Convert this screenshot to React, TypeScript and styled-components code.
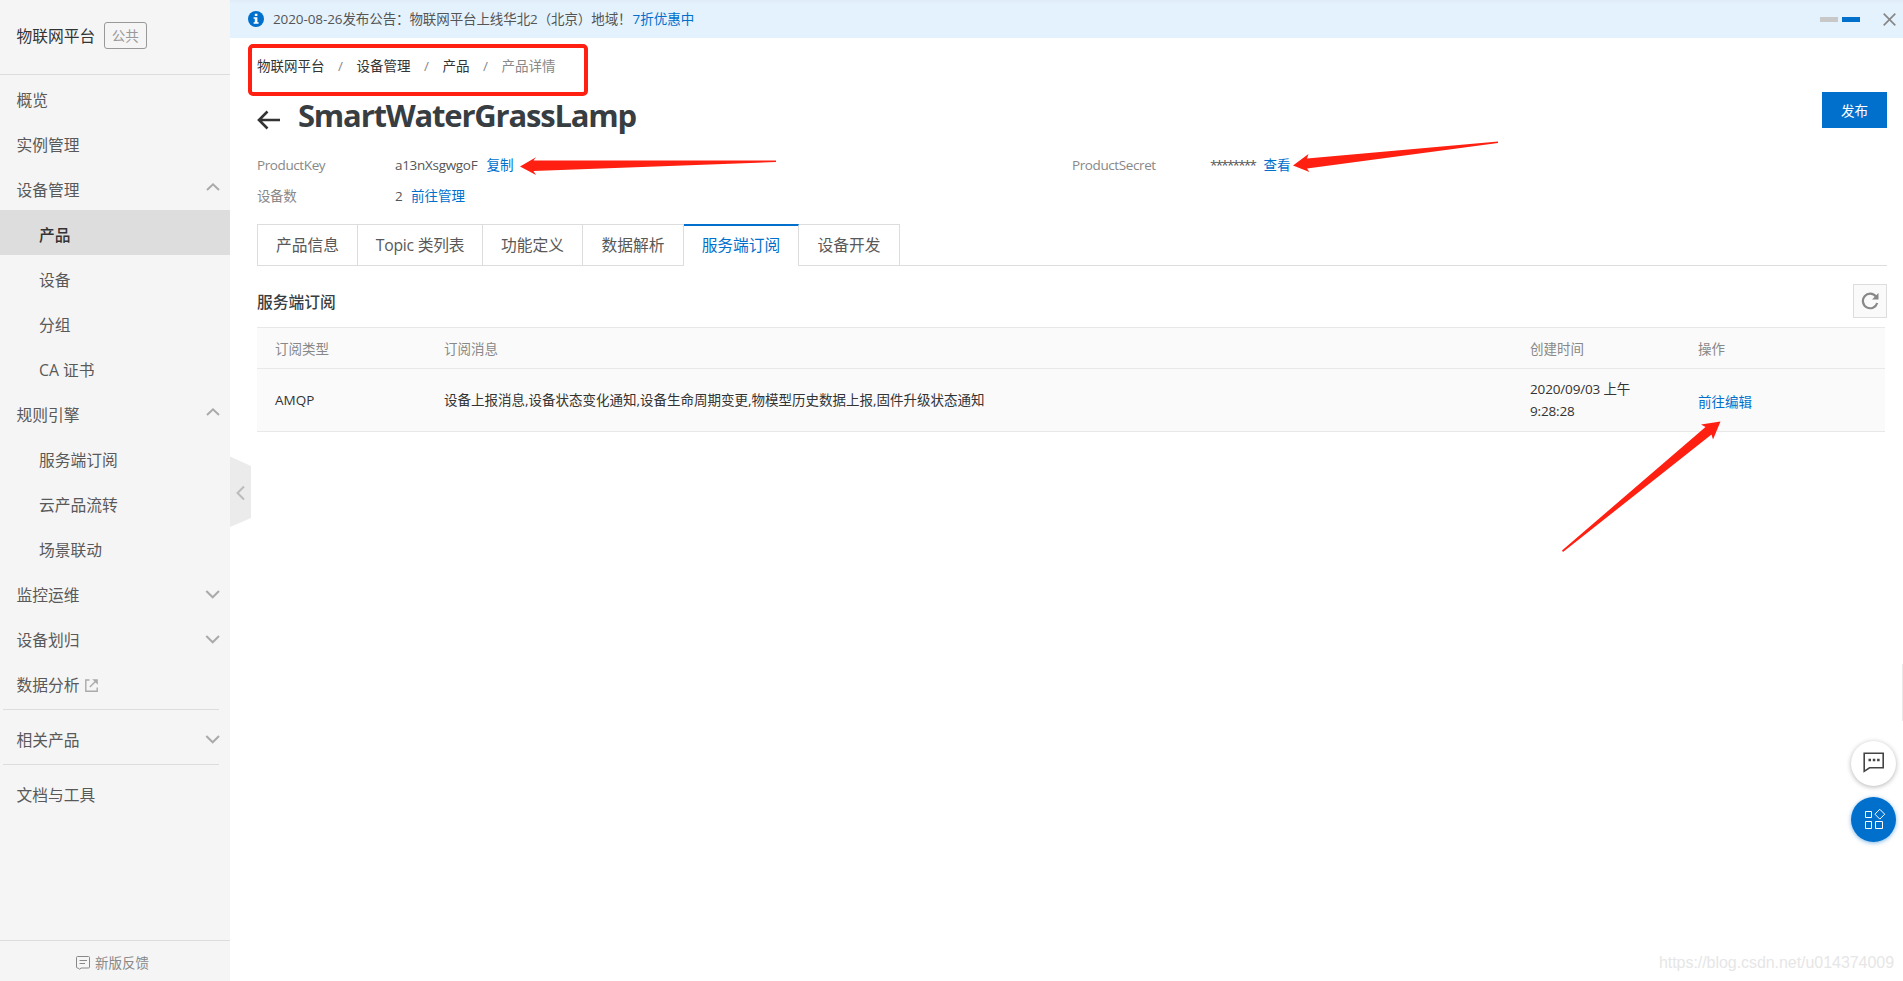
import React from 'react';
import styled, { createGlobalStyle, css } from 'styled-components';

const BLUE = '#0070cc';
const RED = '#ff2012';

const GlobalStyle = createGlobalStyle`
  * { box-sizing: border-box; }
  body {
    margin: 0;
    background: #fff;
    color: #333;
    font: 400 13.5px/20px 'Open Sans', 'Noto Sans CJK SC', sans-serif;
    overflow: hidden;
  }
`;

const Page = styled.div`
  position: relative;
  display: flex;
  width: 100vw;
  height: 100vh;
  min-width: 1903px;
`;

const Sidebar = styled.aside`
  display: flex;
  flex-direction: column;
  flex: none;
  width: 230px;
  background: #f5f5f5;
  color: #595959;
  font-size: 15.75px;
`;

const SideHeader = styled.div`
  display: flex;
  align-items: center;
  gap: 8.5px;
  height: 75px;
  padding: 0 0 3px 16.5px;
  border-bottom: 1px solid #ddd;
  color: #333;
  white-space: nowrap;
`;

const Badge = styled.span`
  width: 43px;
  height: 27px;
  border: 1px solid #999;
  border-radius: 3px;
  color: #999;
  font-size: 13.5px;
  line-height: 26px;
  text-align: center;
`;

const SideRow = styled.div<{ $sub?: boolean; $active?: boolean }>`
  display: flex;
  align-items: center;
  justify-content: space-between;
  height: 45px;
  padding: 0 9px 0 ${p => (p.$sub ? 39 : 16.5)}px;
  white-space: nowrap;
  ${p =>
    p.$active &&
    css`
      background: #ddd;
      color: #333;
      font-weight: 500;
    `}
`;

const RowLabel = styled.span`
  display: flex;
  align-items: center;
  gap: 5px;
  padding-top: 5px;
`;

const Divider = styled.div`
  flex: none;
  height: 1px;
  margin: 4px 11px 5px 3px;
  background: #ddd;
`;

const SideFooter = styled.div`
  display: flex;
  align-items: center;
  justify-content: center;
  gap: 5px;
  height: 41px;
  margin-top: auto;
  padding: 3px 5px 0 0;
  border-top: 1px solid #ddd;
  color: #888;
  font-size: 13.5px;
`;

const Main = styled.main`
  display: flex;
  flex-direction: column;
  flex: 1;
  min-width: 0;
`;

const Notice = styled.div`
  display: flex;
  align-items: center;
  height: 38px;
  padding: 0 7px 0 18px;
  background: linear-gradient(#dfecf8, #e4f2fe 4px);
  color: #555;
  white-space: nowrap;
`;

const NoticeText = styled.span`
  margin: 0 0 1px 9px;
  letter-spacing: -0.1px;
`;

const Link = styled.a`
  color: ${BLUE};
`;

const NoticeLink = styled(Link)`
  margin: 0 auto 1px 1px;
`;

const Dots = styled.div`
  display: flex;
  gap: 4px;
  margin-right: 23px;
`;

const Dot = styled.span<{ $on?: boolean }>`
  width: 18px;
  height: 5px;
  background: ${p => (p.$on ? BLUE : '#c8c8c8')};
`;

const Content = styled.div`
  display: flex;
  flex-direction: column;
  padding: 0 16px 0 27px;
`;

const Breadcrumb = styled.nav`
  display: flex;
  height: 20px;
  margin-top: 18px;
  white-space: nowrap;
`;

const Separator = styled.span`
  width: 32px;
  text-align: center;
  color: #888;
`;

const Muted = styled.span`
  color: #888;
`;

const TitleRow = styled.div`
  display: flex;
  justify-content: space-between;
  height: 48px;
  margin-top: 16px;
`;

const TitleGroup = styled.div`
  display: flex;
  gap: 18px;
`;

const BackIcon = styled.svg`
  margin: 18px 0 0 0;
`;

const Title = styled.h1`
  margin: 2px 0 0;
  color: #373d41;
  font-size: 31px;
  line-height: 42px;
  font-weight: 700;
  letter-spacing: -1.2px;
`;

const PublishButton = styled.button`
  width: 65px;
  height: 36px;
  padding: 2px 0 0;
  border: 0;
  background: ${BLUE};
  color: #fff;
  font: inherit;
`;

const Fields = styled.div`
  display: grid;
  grid-template-columns: 815px 1fr;
  grid-auto-rows: 20px;
  row-gap: 11px;
  margin-top: 15px;
  white-space: nowrap;
`;

const Field = styled.div`
  display: flex;
`;

const FieldLabel = styled.span`
  width: 138px;
  color: #888;
  letter-spacing: -0.4px;
`;

const FieldValue = styled.span<{ $tracking?: number; $w?: number }>`
  width: ${p => p.$w ?? 16}px;
  color: #555;
  letter-spacing: ${p => p.$tracking ?? 0}px;
`;

const Tabs = styled.div`
  display: flex;
  height: 42px;
  margin-top: 18px;
  border-bottom: 1px solid #ddd;
  font-size: 15.75px;
`;

const Tab = styled.div<{ $w: number; $tracking?: number; $active?: boolean }>`
  width: ${p => p.$w}px;
  height: 41px;
  border: 1px solid #ddd;
  border-width: 1px 1px 0 0;
  color: #595959;
  letter-spacing: ${p => p.$tracking ?? 0}px;
  line-height: 41px;
  text-align: center;
  white-space: nowrap;
  &:first-child {
    border-left-width: 1px;
  }
  ${p =>
    p.$active &&
    css`
      height: 42px;
      border-top: 2px solid ${BLUE};
      background: #fff;
      color: ${BLUE};
      line-height: 39px;
    `}
`;

const SectionHead = styled.div`
  display: flex;
  justify-content: space-between;
  height: 34px;
  margin-top: 18px;
`;

const SectionTitle = styled.h2`
  margin: 1px 0 0;
  color: #373d41;
  font-size: 15.75px;
  line-height: 34px;
  font-weight: 500;
`;

const RefreshButton = styled.button`
  display: flex;
  align-items: center;
  justify-content: center;
  width: 34px;
  height: 34px;
  padding: 0;
  border: 1px solid #ddd;
  background: #fafafa;
`;

const Table = styled.div`
  margin: 9px 2px 0 0;
  border-top: 1px solid #e8e8e8;
  background: #fafafa;
`;

const TableRow = styled.div<{ $head?: boolean }>`
  display: grid;
  grid-template-columns: 169px 1086px 168px 1fr;
  align-items: center;
  height: ${p => (p.$head ? 41 : 63)}px;
  padding: ${p => (p.$head ? 1 : 0)}px 0 0 18px;
  border-bottom: 1px solid #e8e8e8;
  color: ${p => (p.$head ? '#888' : '#333')};
  line-height: 22px;
  white-space: nowrap;
`;

const TimeCell = styled.span`
  letter-spacing: -0.15px;
`;

const ActionLink = styled(Link)`
  padding-top: 4px;
`;

const CollapseHandle = styled.svg`
  position: absolute;
  left: 230px;
  top: 456px;
`;

const Highlight = styled.div`
  position: absolute;
  left: 248px;
  top: 44px;
  width: 340px;
  height: 52px;
  border: 4px solid ${RED};
  border-radius: 5px;
`;

const Arrows = styled.svg`
  position: absolute;
  left: 0;
  top: 0;
  pointer-events: none;
`;

const FloatButtons = styled.div`
  position: absolute;
  right: 7px;
  top: 741px;
  display: flex;
  flex-direction: column;
  gap: 11px;
`;

const RoundButton = styled.div<{ $primary?: boolean }>`
  width: 45px;
  height: 45px;
  border-radius: 50%;
  background: ${p => (p.$primary ? BLUE : '#fff')};
  box-shadow: ${p =>
    p.$primary ? '0 1px 4px rgba(0,112,204,.5)' : '0 1px 5px rgba(0,0,0,.3)'};
`;

const EdgeTab = styled.div`
  position: absolute;
  right: 0;
  top: 664px;
  width: 1px;
  height: 57px;
  background: #e8e8e8;
`;

const Watermark = styled.div`
  position: absolute;
  right: 9px;
  bottom: 8px;
  color: #e6e6e6;
  font: 16px/20px 'Liberation Sans', sans-serif;
  letter-spacing: -0.05px;
`;

const Chevron = ({ up }: { up?: boolean }) => (
  <svg width="16" height="12" viewBox="0 0 16 12" fill="none" stroke="#aaa" strokeWidth="2">
    {up ? <path d="M2 8L8 2.3L14 8" /> : <path d="M1.3 4L7.7 10.3L14 4" />}
  </svg>
);

const ExternalIcon = () => (
  <svg width="13" height="13" viewBox="0 0 13 13" fill="none" stroke="#aaa" strokeWidth="1.4">
    <path d="M4.5 1H0.8V12.2H12.2V8.5M4.8 8L11 2" />
    <path d="M7.2 0.2H12.8V5.8Z" fill="#aaa" stroke="none" />
  </svg>
);

type NavItem = { label: string; sub?: boolean; active?: boolean; arrow?: 'up' | 'down'; external?: boolean };

const navItems: NavItem[] = [
  { label: '概览' },
  { label: '实例管理' },
  { label: '设备管理', arrow: 'up' },
  { label: '产品', sub: true, active: true },
  { label: '设备', sub: true },
  { label: '分组', sub: true },
  { label: 'CA 证书', sub: true },
  { label: '规则引擎', arrow: 'up' },
  { label: '服务端订阅', sub: true },
  { label: '云产品流转', sub: true },
  { label: '场景联动', sub: true },
  { label: '监控运维', arrow: 'down' },
  { label: '设备划归', arrow: 'down' },
  { label: '数据分析', external: true },
];

const tabs = [
  { label: '产品信息', w: 101 },
  { label: 'Topic 类列表', w: 125, tracking: -0.25 },
  { label: '功能定义', w: 100 },
  { label: '数据解析', w: 101 },
  { label: '服务端订阅', w: 115, active: true },
  { label: '设备开发', w: 101 },
];

const NavRow = ({ item }: { item: NavItem }) => (
  <SideRow $sub={item.sub} $active={item.active}>
    <RowLabel>
      {item.label}
      {item.external && <ExternalIcon />}
    </RowLabel>
    {item.arrow && <Chevron up={item.arrow === 'up'} />}
  </SideRow>
);

export default function App() {
  return (
    <Page>
      <GlobalStyle />
      <Sidebar>
        <SideHeader>
          物联网平台
          <Badge>公共</Badge>
        </SideHeader>
        {navItems.map(item => (
          <NavRow key={item.label} item={item} />
        ))}
        <Divider />
        <NavRow item={{ label: '相关产品', arrow: 'down' }} />
        <Divider />
        <NavRow item={{ label: '文档与工具' }} />
        <SideFooter>
          <svg width="14" height="14" viewBox="0 0 14 14" fill="none" stroke="#888">
            <path d="M1.5 0.5H12.5Q13.5 0.5 13.5 1.5V11Q13.5 12 12.5 12H5L3.5 13.3L2.3 12H1.5Q0.5 12 0.5 11V1.5Q0.5 0.5 1.5 0.5ZM3.5 4.5H11M3.5 7.5H9" />
          </svg>
          新版反馈
        </SideFooter>
      </Sidebar>
      <Main>
        <Notice>
          <svg width="16" height="16" viewBox="0 0 16 16">
            <circle cx="8" cy="8" r="8" fill={BLUE} />
            <path d="M6.8 2.8H9.4V5H6.8ZM5.6 6.3H9.4V11.3H10.6V12.8H5.6V11.3H6.8V7.8H5.6Z" fill="#fff" />
          </svg>
          <NoticeText>2020-08-26发布公告：物联网平台上线华北2（北京）地域！</NoticeText>
          <NoticeLink>7折优惠中</NoticeLink>
          <Dots>
            <Dot />
            <Dot $on />
          </Dots>
          <svg width="13" height="13" viewBox="0 0 13 13" stroke="#888" strokeWidth="1.7">
            <path d="M0.7 0.7L12.3 12.3M12.3 0.7L0.7 12.3" />
          </svg>
        </Notice>
        <Content>
          <Breadcrumb>
            <span>物联网平台</span>
            <Separator>/</Separator>
            <span>设备管理</span>
            <Separator>/</Separator>
            <span>产品</span>
            <Separator>/</Separator>
            <Muted>产品详情</Muted>
          </Breadcrumb>
          <TitleRow>
            <TitleGroup>
              <BackIcon width="23" height="20" viewBox="0 0 23 20" fill="none" stroke="#333" strokeWidth="2.6">
                <path d="M10.5 1.5L2 10L10.5 18.5M2 10H23" />
              </BackIcon>
              <Title>SmartWaterGrassLamp</Title>
            </TitleGroup>
            <PublishButton>发布</PublishButton>
          </TitleRow>
          <Fields>
            <Field>
              <FieldLabel>ProductKey</FieldLabel>
              <FieldValue $w={91.5} $tracking={-0.3}>a13nXsgwgoF</FieldValue>
              <Link>复制</Link>
            </Field>
            <Field>
              <FieldLabel>ProductSecret</FieldLabel>
              <FieldValue $w={53.5} $tracking={-1.8}>********</FieldValue>
              <Link>查看</Link>
            </Field>
            <Field>
              <FieldLabel>设备数</FieldLabel>
              <FieldValue>2</FieldValue>
              <Link>前往管理</Link>
            </Field>
          </Fields>
          <Tabs>
            {tabs.map(t => (
              <Tab key={t.label} $w={t.w} $tracking={t.tracking} $active={t.active}>
                {t.label}
              </Tab>
            ))}
          </Tabs>
          <SectionHead>
            <SectionTitle>服务端订阅</SectionTitle>
            <RefreshButton>
              <svg width="18" height="18" viewBox="0 0 18 18" fill="none" stroke="#888" strokeWidth="2.2">
                <path d="M16.2 11A7.3 7.3 0 1 1 15 4.5" />
                <path d="M17.5 1V7.5H11Z" fill="#888" stroke="none" />
              </svg>
            </RefreshButton>
          </SectionHead>
          <Table>
            <TableRow $head>
              <span>订阅类型</span>
              <span>订阅消息</span>
              <span>创建时间</span>
              <span>操作</span>
            </TableRow>
            <TableRow>
              <span>AMQP</span>
              <span>设备上报消息,设备状态变化通知,设备生命周期变更,物模型历史数据上报,固件升级状态通知</span>
              <TimeCell>
                2020/09/03 上午
                <br />
                9:28:28
              </TimeCell>
              <ActionLink>前往编辑</ActionLink>
            </TableRow>
          </Table>
        </Content>
      </Main>
      <CollapseHandle width="21" height="71" viewBox="0 0 21 71">
        <path d="M0 0.5L21 10V62L0 71Z" fill="#ebebeb" />
        <path d="M14 30.5L7.5 37L14 43.5" fill="none" stroke="#bbb" strokeWidth="2" />
      </CollapseHandle>
      <EdgeTab />
      <FloatButtons>
        <RoundButton>
          <svg width="45" height="45" viewBox="0 0 45 45" fill="none" stroke="#444" strokeWidth="1.6">
            <path d="M13.2 12.2H32.2V26.8H18.5L13.2 30.3Z" />
            <path d="M17.5 19H20M21.8 19H24.3M26.1 19H28.6" strokeWidth="2.4" />
          </svg>
        </RoundButton>
        <RoundButton $primary>
          <svg width="45" height="45" viewBox="0 0 45 45" fill="none" stroke="#fff" strokeWidth="1">
            <path d="M14.5 14.5H20.5V20.5H14.5ZM14.5 24.5H20.5V31.5H14.5ZM24.5 24.5H31.5V31.5H24.5ZM28.8 12.3L33.7 17.2L28.8 22.1L23.9 17.2Z" />
          </svg>
        </RoundButton>
      </FloatButtons>
      <Highlight />
      <Arrows width="1903" height="981" viewBox="0 0 1903 981" fill={RED}>
        <path d="M520 166.5L536 157.3L533.5 160.5L776 160.5V162L533.5 171L536 175Z" />
        <path d="M1293 165.5L1308.5 154L1307 158.5L1498 141.5V143L1307 168.5L1309.5 172Z" />
        <path d="M1720.5 421.5L1701 424.5L1705.5 427L1562 550.5L1563 552L1711.5 434.5L1713 439.5Z" />
      </Arrows>
      <Watermark>https://blog.csdn.net/u014374009</Watermark>
    </Page>
  );
}
